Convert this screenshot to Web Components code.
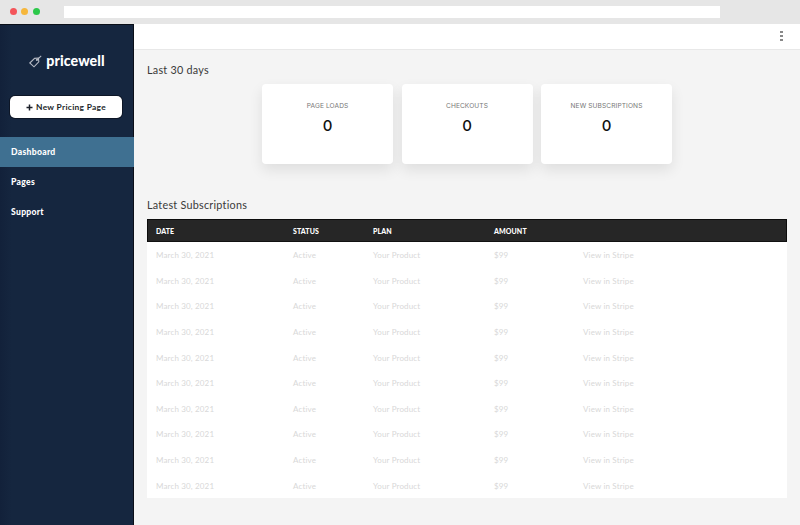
<!DOCTYPE html>
<html><head><meta charset="utf-8"><style>
html,body{margin:0;height:100%;overflow:hidden}
body{font-family:"Lato","Liberation Sans",sans-serif}
</style></head><body>
<app-frame>
<side-bar slot="side"></side-bar>
<top-bar slot="top"></top-bar>
<section-title>Last 30 days</section-title>
<stat-row>
<stat-card label="PAGE LOADS" value="0"></stat-card>
<stat-card label="CHECKOUTS" value="0"></stat-card>
<stat-card label="NEW SUBSCRIPTIONS" value="0"></stat-card>
</stat-row>
<section-title class="second">Latest Subscriptions</section-title>
<subs-table></subs-table>
</app-frame>
<script>
function def(name,html){
  customElements.define(name,class extends HTMLElement{
    connectedCallback(){
      if(this.shadowRoot)return;
      const r=this.attachShadow({mode:'open'});
      r.innerHTML=typeof html==='function'?html(this):html;
    }
  });
}
def('app-frame',`<style>
:host{display:flex;flex-direction:column;width:800px;height:525px;overflow:hidden;background:#f4f4f4}
.chrome{flex:none;height:24px;background:#e6e6e6;display:flex;align-items:center;padding:0 0 1px 9.5px;box-sizing:border-box}
.d{width:7px;height:7px;border-radius:50%;margin-right:4.5px}
.url{margin-left:20px;width:656px;height:12px;background:#fff}
.body{flex:1;display:flex;min-height:0}
.main{flex:1;display:flex;flex-direction:column;min-width:0}
.content{padding:0 13px;flex:1}
</style>
<div class="chrome"><i class="d" style="background:#f4555a"></i><i class="d" style="background:#f6b73c"></i><i class="d" style="background:#2cc84a"></i><div class="url"></div></div>
<div class="body"><slot name="side"></slot><div class="main"><slot name="top"></slot><div class="content"><slot></slot></div></div></div>`);
def('side-bar',`<style>
:host{display:block;flex:none;width:134px;box-sizing:border-box;background:linear-gradient(90deg,#12213a 0,#15263f 12px,#15263f 100%);border-right:1px solid #0a0f18;border-top:1px solid #0a0f18;color:#fff}
.logo{display:flex;align-items:center;justify-content:center;gap:4px;height:71px;font:900 14.2px "Lato",sans-serif;letter-spacing:.1px;box-sizing:border-box;padding-left:1px}
.btn{display:flex;align-items:center;justify-content:center;gap:3px;margin:0 11px 0 10px;height:22px;background:#fff;border-radius:5px;color:#1b1f28;font:700 8.4px "Lato",sans-serif;letter-spacing:.3px;box-shadow:0 0 0 1px #0d1626}
.nav{margin-top:19px}
a{display:flex;align-items:center;height:30px;box-sizing:border-box;padding:0 0 1px 11px;font:900 8.6px "Lato",sans-serif;letter-spacing:.3px;color:#fff}
a.on{background:#3f7091;margin-right:-1px}
</style>
<div class="logo"><svg width="13" height="13" viewBox="0 0 13 13" fill="none" stroke="#b5bac4" stroke-width="1.1" style="margin-top:2px"><path d="M.8 8 L5.6 3.4 L9.4 3 L9.8 6.8 L5 11.8 Z"/><circle cx="7.9" cy="4.9" r=".5"/><path d="M8 4.8 L12.2 .8"/></svg><span>pricewell</span></div>
<div class="btn"><svg width="7" height="7" viewBox="0 0 7 7"><path d="M3.5 0.5v6M.5 3.5h6" stroke="#1b1f28" stroke-width="1.5"/></svg><span>New Pricing Page</span></div>
<div class="nav"><a class="on">Dashboard</a><a>Pages</a><a>Support</a></div>`);
def('top-bar',`<style>
:host{display:flex;align-items:center;justify-content:flex-end;flex:none;height:26px;box-sizing:border-box;background:#fff;border-bottom:1px solid #e8e8e8;padding-right:17.5px}
.k{display:flex;flex-direction:column;gap:1.5px;margin-top:-1px}
i{width:3px;height:2.5px;background:#888;display:block}
</style><div class="k"><i></i><i></i><i></i></div>`);
def('section-title',`<style>
:host{display:block;font:400 10.8px/14px "Lato",sans-serif;letter-spacing:.25px;color:#3a3a3a;padding-top:13px}
:host(.second){padding-top:34px}
</style><slot></slot>`);
def('stat-row',`<style>
:host{display:flex;justify-content:center;gap:8.5px;margin-top:7px}
</style><slot></slot>`);
def('stat-card',h=>`<style>
:host{display:flex;flex-direction:column;align-items:center;width:131px;height:80px;box-sizing:border-box;background:#fff;border-radius:4px;box-shadow:0 6px 14px rgba(0,0,0,.09);padding-top:18px}
.l{font:400 6.6px/9px "Inter",sans-serif;letter-spacing:.1px;color:#777}
.v{font:500 15px/20px "Inter",sans-serif;color:#111;margin-top:5px}
</style><div class="l">${h.getAttribute('label')}</div><div class="v">${h.getAttribute('value')}</div>`);
const cols='grid-template-columns:137px 80px 121px 89px 1fr';
let rows='';
for(let i=0;i<10;i++)rows+=`<div class="r"><span>March 30, 2021</span><span>Active</span><span>Your Product</span><span>$99</span><span>View in Stripe</span></div>`;
def('subs-table',`<style>
:host{display:block;margin-top:7px;width:640px;background:#fff;height:279px}
.h,.r{display:grid;${cols};align-items:center}
.h{height:23px;box-sizing:border-box;background:#262626;border:1px solid #0c0c0c;border-bottom-color:#111;color:#fff;font:900 7px "Lato",sans-serif;letter-spacing:.1px}
.h span{padding-left:8px}
.r{height:25.6px;color:#d8d8d8;font:400 8px "Lato",sans-serif;letter-spacing:.15px}
.r span{padding:1px 0 0 9px}
</style><div class="h"><span>DATE</span><span>STATUS</span><span>PLAN</span><span>AMOUNT</span><span></span></div>${rows}`);
</script>
</body></html>
